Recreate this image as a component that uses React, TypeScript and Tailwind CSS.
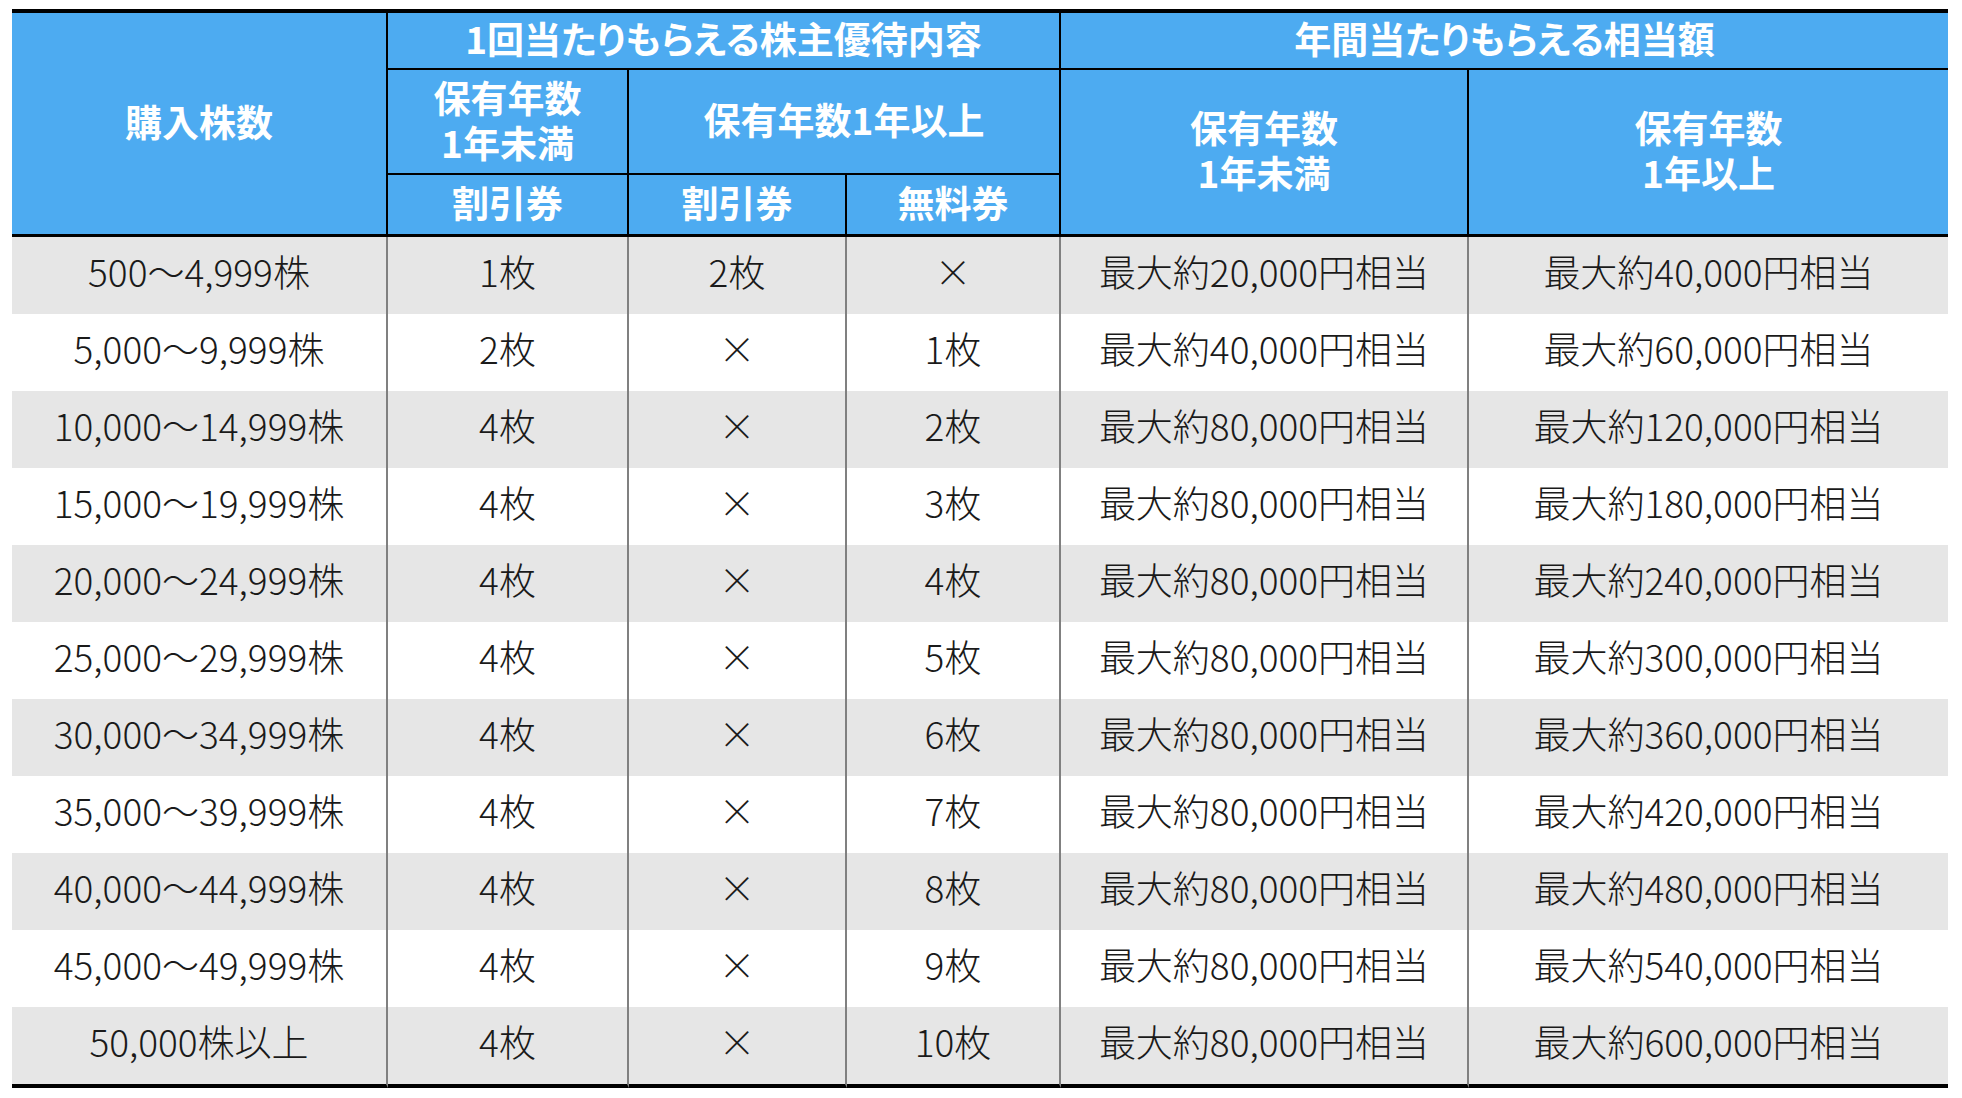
const rows = [
  ['500～4,999株', '1枚', '2枚', '×', '最大約20,000円相当', '最大約40,000円相当'],
  ['5,000～9,999株', '2枚', '×', '1枚', '最大約40,000円相当', '最大約60,000円相当'],
  ['10,000～14,999株', '4枚', '×', '2枚', '最大約80,000円相当', '最大約120,000円相当'],
  ['15,000～19,999株', '4枚', '×', '3枚', '最大約80,000円相当', '最大約180,000円相当'],
  ['20,000～24,999株', '4枚', '×', '4枚', '最大約80,000円相当', '最大約240,000円相当'],
  ['25,000～29,999株', '4枚', '×', '5枚', '最大約80,000円相当', '最大約300,000円相当'],
  ['30,000～34,999株', '4枚', '×', '6枚', '最大約80,000円相当', '最大約360,000円相当'],
  ['35,000～39,999株', '4枚', '×', '7枚', '最大約80,000円相当', '最大約420,000円相当'],
  ['40,000～44,999株', '4枚', '×', '8枚', '最大約80,000円相当', '最大約480,000円相当'],
  ['45,000～49,999株', '4枚', '×', '9枚', '最大約80,000円相当', '最大約540,000円相当'],
  ['50,000株以上', '4枚', '×', '10枚', '最大約80,000円相当', '最大約600,000円相当'],
]

const th = 'p-0 pb-[4px] text-center align-middle font-bold text-white text-[37px] leading-[45px] border-black'

export default function App() {
  return (
    <div className="min-h-screen bg-white pt-[9px] pl-[12px] font-['Noto_Sans_CJK_JP',sans-serif]">
      <table className="table-fixed w-[1936px] border-separate border-spacing-0 border-t-4 border-black">
        <colgroup>
          <col className="w-[376px]" />
          <col className="w-[241px]" />
          <col className="w-[218px]" />
          <col className="w-[214px]" />
          <col className="w-[408px]" />
          <col className="w-[479px]" />
        </colgroup>
        <thead className="bg-[#4dabf1]">
          <tr className="h-[57px]">
            <th rowSpan={3} className={`${th} border-r-2 border-b-[3px]`}>購入株数</th>
            <th colSpan={3} className={`${th} border-r-2 border-b-2 [font-feature-settings:'palt']`}>1回当たりもらえる株主優待内容</th>
            <th colSpan={2} className={`${th} border-b-2 [font-feature-settings:'palt']`}>年間当たりもらえる相当額</th>
          </tr>
          <tr className="h-[105px]">
            <th className={`${th} border-r-2 border-b-2`}>
              保有年数
              <br />
              1年未満
            </th>
            <th colSpan={2} className={`${th} border-r-2 border-b-2`}>保有年数1年以上</th>
            <th rowSpan={2} className={`${th} border-r-2 border-b-[3px]`}>
              保有年数
              <br />
              1年未満
            </th>
            <th rowSpan={2} className={`${th} border-b-[3px]`}>
              保有年数
              <br />
              1年以上
            </th>
          </tr>
          <tr className="h-[62px]">
            <th className={`${th} border-r-2 border-b-[3px]`}>割引券</th>
            <th className={`${th} border-r-2 border-b-[3px]`}>割引券</th>
            <th className={`${th} border-r-2 border-b-[3px]`}>無料券</th>
          </tr>
        </thead>
        <tbody>
          {rows.map((r, i) => {
            const last = i === rows.length - 1
            return (
              <tr key={i} className={`${last ? 'h-[81px]' : 'h-[77px]'} ${i % 2 === 0 ? 'bg-[#e6e6e6]' : 'bg-white'}`}>
                {r.map((c, j) => (
                  <td
                    key={j}
                    className={`p-0 pb-[8px] text-center align-middle text-[37px] font-light text-[#1a1a1a] ${
                      j < 5 ? 'border-r-2 border-r-[#808080]' : ''
                    } ${last ? 'border-b-4 border-b-black' : ''}`}
                  >
                    {c}
                  </td>
                ))}
              </tr>
            )
          })}
        </tbody>
      </table>
    </div>
  )
}
